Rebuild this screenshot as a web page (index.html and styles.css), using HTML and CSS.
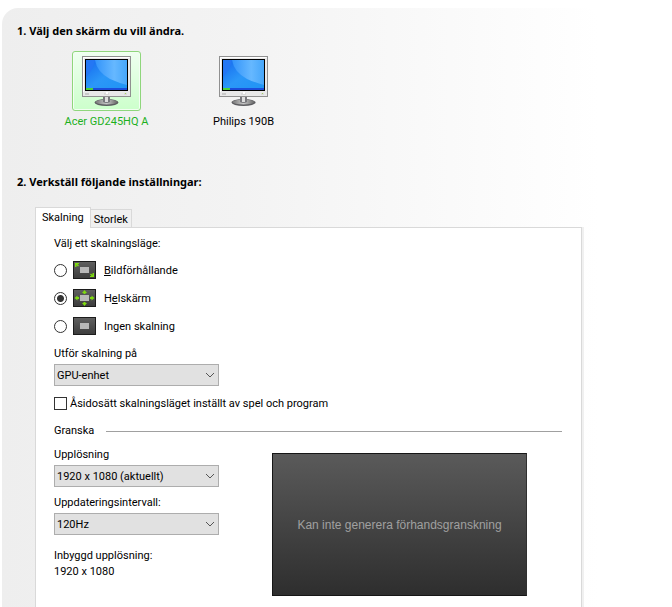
FILE: index.html
```html
<!DOCTYPE html>
<html lang="sv">
<head>
    <meta charset="UTF-8">
    <meta name="viewport" content="width=device-width, initial-scale=1.0">
    <title>Skrivbordets storlek och placering</title>
    <link rel="stylesheet" href="styles.css">
</head>
<body>
    <!-- shared gradients and the monitor drawing -->
    <svg class="defs" width="0" height="0" aria-hidden="true">
        <defs>
            <linearGradient id="screen" x1="0" y1="0" x2="1" y2="1">
                <stop offset="0" stop-color="#1568ee"/>
                <stop offset="0.5" stop-color="#2b97f8"/>
                <stop offset="1" stop-color="#1f94f4"/>
            </linearGradient>
            <linearGradient id="glow" x1="0" y1="0" x2="1" y2="0">
                <stop offset="0" stop-color="#3394fa"/>
                <stop offset="0.6" stop-color="#66b8ff"/>
                <stop offset="1" stop-color="#46a6fa"/>
            </linearGradient>
            <linearGradient id="foot" x1="0" y1="0" x2="1" y2="0">
                <stop offset="0" stop-color="#777"/>
                <stop offset="0.5" stop-color="#c8c8c8"/>
                <stop offset="1" stop-color="#666"/>
            </linearGradient>
            <linearGradient id="tile" x1="0" y1="0" x2="0" y2="1">
                <stop offset="0" stop-color="#606060"/>
                <stop offset="1" stop-color="#3c3c3c"/>
            </linearGradient>
            <symbol id="monitor" viewBox="0 0 49 50">
                <ellipse cx="24.500" cy="46.500" rx="12" ry="3.500" fill="#5c5c60"/>
                <ellipse cx="24.500" cy="46" rx="11" ry="2.500" fill="url(#foot)"/>
                <path d="M21 41h7v5q-3.500 2-7 0z" fill="#77777c"/>
                <path d="M23 41h3v5h-3z" fill="#ddd"/>
                <rect x="0.5" y="0.5" width="48" height="40" fill="#e9e9ea" stroke="#909090"/>
                <path d="M1.5 40V1.500h46" fill="none" stroke="#fff"/>
                <rect x="3" y="3" width="43" height="32" fill="#000"/>
                <rect x="4" y="4" width="41" height="30" fill="url(#screen)"/>
                <path d="M13 4q2 12 15 19 9 4 17 6V4z" fill="url(#glow)"/>
                <path d="M4 4h9q-2 10-9 17z" fill="#2477f4"/>
                <rect x="4" y="32" width="41" height="2" fill="#1b4ddb"/>
                <rect x="4" y="32" width="7" height="2" fill="#4bd23a"/>
                <rect x="1" y="36" width="47" height="4" fill="#e8e8e8"/>
                <path d="M3 38h4" stroke="#aaa"/>
                <path d="M22 38h5M42 38h3" stroke="#ccc"/>
                <rect x="43" y="37" width="1" height="1" fill="#a5d85a"/>
                <path d="M24 36h2v2h-2z" fill="#fff"/>
            </symbol>
        </defs>
    </svg>

    <main class="wizard">
        <h2>1. Välj den skärm du vill ändra.</h2>
        <div class="displays">
            <button type="button" class="display selected">
                <span class="thumb"><svg width="49" height="50"><use href="#monitor"/></svg></span>
                Acer GD245HQ A
            </button>
            <button type="button" class="display">
                <span class="thumb"><svg width="49" height="50"><use href="#monitor"/></svg></span>
                Philips 190B
            </button>
        </div>

        <h2>2. Verkställ följande inställningar:</h2>
        <div class="tabs" role="tablist">
            <button type="button" class="tab active" role="tab" aria-selected="true">Skalning</button>
            <button type="button" class="tab" role="tab" aria-selected="false">Storlek</button>
        </div>

        <form class="panel">
            <fieldset class="modes">
                <legend>Välj ett skalningsläge:</legend>
                <label class="mode">
                    <input type="radio" name="mode">
                    <svg width="23" height="18" viewBox="0 0 23 18">
                        <rect x="0.5" y="0.5" width="22" height="17" fill="url(#tile)" stroke="#1c1c1c"/>
                        <rect x="7" y="6" width="9" height="6" fill="#b8b8b8"/>
                        <path d="M2 2h4v1H4.500L6 4.500 5 5.500 3.500 4v2H2zM21 16h-4v-1h1.500L17 13.500l1-1 1.500 1.500v-2H21z" fill="#7fdb10"/>
                    </svg>
                    <span><u>B</u>ildförhållande</span>
                </label>
                <label class="mode">
                    <input type="radio" name="mode" checked>
                    <svg width="23" height="18" viewBox="0 0 23 18">
                        <rect x="0.5" y="0.5" width="22" height="17" fill="url(#tile)" stroke="#1c1c1c"/>
                        <rect x="7" y="6" width="9" height="6" fill="#b8b8b8"/>
                        <path d="M11.500 1L14 4h-1.500v1h-2V4H9zM11.500 17L9 14h1.500v-1h2v1H14zM1.500 9L4.500 6.500V8H6v2H4.500v1.500zM21.500 9L18.500 6.500V8H17v2h1.500v1.500z" fill="#7fdb10"/>
                    </svg>
                    <span>H<u>e</u>lskärm</span>
                </label>
                <label class="mode">
                    <input type="radio" name="mode">
                    <svg width="23" height="18" viewBox="0 0 23 18">
                        <rect x="0.5" y="0.5" width="22" height="17" fill="url(#tile)" stroke="#1c1c1c"/>
                        <rect x="7" y="6" width="9" height="6" fill="#b8b8b8"/>
                    </svg>
                    <span>In<u>g</u>en skalning</span>
                </label>
            </fieldset>

            <div class="field">
                <label for="device">Utför skalning på</label>
                <select id="device"><option>GPU-enhet</option></select>
            </div>
            <label class="check"><input type="checkbox"><span>Åsidosätt skalningsläget inställt av spel och program</span></label>

            <h3>Granska</h3>
            <div class="review">
                <div class="settings">
                    <div class="field">
                        <label for="resolution">Upplösning</label>
                        <select id="resolution"><option>1920 x 1080 (aktuellt)</option></select>
                    </div>
                    <div class="field">
                        <label for="refresh">Uppdateringsintervall:</label>
                        <select id="refresh"><option>120Hz</option></select>
                    </div>
                    <p class="native">Inbyggd upplösning:<br>1920 x 1080</p>
                </div>
                <div class="preview">Kan inte generera förhandsgranskning</div>
            </div>
        </form>
    </main>
</body>
</html>
```
FILE: styles.css
```css
* {
    box-sizing: border-box;
}
body {
    margin: 0;
    min-height: 100vh;
    display: flex;
    background: #fff;
    color: #000;
    font: 11px/16px Roboto, "Noto Sans", sans-serif;
}
button, select, input {
    font: inherit;
    color: inherit;
    margin: 0;
}
.defs {
    position: absolute;
}
.wizard {
    flex: 1;
    display: flex;
    flex-direction: column;
    margin: 8px 72px 0 2px;
    padding: 16px 18px 0 15px;
    border-radius: 16px 16px 0 0;
    background: linear-gradient(to right, #eee, #f3f3f3 40%, #fff);
}
h2 {
    margin: 0;
    font-family: "Noto Sans", sans-serif;
    font-size: 11px;
    line-height: 14px;
}
.displays {
    display: flex;
    margin: 13px 0 45px 21px;
}
.display {
    width: 137px;
    padding: 0;
    border: 0;
    background: none;
    display: flex;
    flex-direction: column;
    align-items: center;
    gap: 3px;
}
.thumb {
    width: 69px;
    height: 60px;
    display: flex;
    align-items: center;
    justify-content: center;
    border: 1px solid transparent;
    border-radius: 3px;
}
.selected {
    color: #1db01d;
}
.selected .thumb {
    border-color: #8fd67c;
    background: linear-gradient(#effff0, #ccffcb);
    box-shadow: inset 0 0 0 1px #f2fff2;
}
.tabs {
    display: flex;
    align-items: flex-end;
    margin: 18px 0 0 18px;
}
.tab {
    height: 18px;
    padding: 2px 3px 0;
    border: 1px solid #d9d9d9;
    border-width: 1px 1px 0 0;
    background: #f0f0f0;
}
.tab.active {
    height: 21px;
    margin-bottom: -1px;
    padding: 0 6px;
    border-left-width: 1px;
    background: #fff;
    z-index: 1;
}
.panel {
    flex: 1;
    margin-left: 18px;
    padding: 8px 19px 10px 18px;
    border: 1px solid #d9d9d9;
    border-bottom: 0;
    box-shadow: 2px 0 #f0f0f0;
    background: #fff;
}
.modes {
    margin: 0 0 6px;
    padding: 0;
    border: 0;
}
legend {
    padding: 0;
    margin-bottom: 4px;
}
.mode {
    display: flex;
    align-items: center;
    height: 28px;
}
.mode svg {
    margin: 0 8px 0 6px;
}
.mode span, .check span {
    padding-top: 2px;
}
input[type="radio"], input[type="checkbox"] {
    appearance: none;
    width: 13px;
    height: 13px;
    border: 1px solid #333;
    background: #fff;
}
input[type="radio"] {
    border-radius: 50%;
}
input[type="radio"]:checked {
    background: radial-gradient(circle, #333 3px, #fff 4px);
}
.field {
    display: flex;
    flex-direction: column;
    gap: 2px;
    width: 165px;
}
select {
    appearance: none;
    height: 22px;
    padding: 2px 24px 0 2px;
    border: 1px solid #adadad;
    border-radius: 0;
    background: #e1e1e1 url("data:image/svg+xml,%3Csvg xmlns='http://www.w3.org/2000/svg' width='10' height='6'%3E%3Cpath d='M1 1l4 4 4-4' fill='none' stroke='%23555'/%3E%3C/svg%3E") no-repeat right 3px center;
}
.check {
    display: flex;
    align-items: center;
    gap: 3px;
    margin: 8px 0 11px;
}
h3 {
    display: flex;
    align-items: center;
    gap: 12px;
    margin: 0 0 8px;
    font-size: 11px;
    font-weight: normal;
}
h3::after {
    content: "";
    flex: 1;
    border-top: 1px solid #a0a0a0;
}
.review {
    display: flex;
    gap: 53px;
}
.settings .field {
    margin-bottom: 8px;
}
.native {
    margin: 13px 0 0;
}
.preview {
    flex: 0 1 255px;
    min-height: 143px;
    margin-top: 6px;
    display: flex;
    align-items: center;
    justify-content: center;
    border: 1px solid #161616;
    border-right-color: #303030;
    background: linear-gradient(#5a5a5a, #2e2e2e);
    color: #a0a0a0;
    font-family: "Liberation Sans", Arial, sans-serif;
    font-size: 12px;
}
```
